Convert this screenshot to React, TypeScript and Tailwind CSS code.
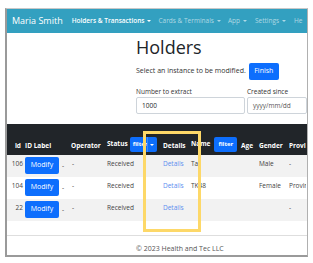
import React from 'react'

const font = { fontFamily: '"Open Sans", "Noto Sans", "Liberation Sans", sans-serif' }

function Caret({ className = '' }: { className?: string }) {
  return (
    <span
      className={`inline-block w-0 h-0 border-l-[2px] border-r-[2px] border-t-[2.5px] border-l-transparent border-r-transparent ml-[3px] align-middle ${className}`}
    />
  )
}

function FilterButton({ split = false }: { split?: boolean }) {
  return (
    <span className="inline-flex h-[15px] rounded-[2px] bg-[#0d6efd] text-white text-[6px] items-center overflow-hidden">
      {split ? (
        <>
          <span className="w-[17px] pl-[3px] overflow-hidden whitespace-nowrap">filter</span>
          <span className="w-[10px] h-full flex items-center justify-center border-l border-[#3d8bfd]">
            <span className="w-0 h-0 border-l-[2px] border-r-[2px] border-t-[2.5px] border-l-transparent border-r-transparent border-t-white" />
          </span>
        </>
      ) : (
        <span className="px-[4px]">filter</span>
      )}
    </span>
  )
}

const rows = [
  { id: '106', name: 'Ta', gender: 'Male', prov: '-', bg: 'bg-[#f2f2f2]' },
  { id: '104', name: 'TK48', gender: 'Female', prov: 'Provir', bg: 'bg-white' },
  { id: '22', name: '', gender: '', prov: '-', bg: 'bg-[#f2f2f2]' },
]

export default function App() {
  return (
    <div className="relative w-[313px] h-[263px] bg-white pl-[5px] pt-[8px]" style={font}>
      <div className="w-[303px] h-[249px] border-l-2 border-b-2 border-t border-r border-l-[#9a9a9a] border-b-[#9a9a9a] border-t-[#c8c8c8] border-r-[#b0b0b0] overflow-hidden flex flex-col">
        {/* Navbar */}
        <div className="h-[24px] shrink-0 bg-[#33a0c0] flex items-center whitespace-nowrap text-white overflow-hidden">
          <span className="ml-[5px] text-[9px]">Maria Smith</span>
          <span className="ml-[9px] text-[6.5px] font-semibold">
            Holders &amp; Transactions<Caret className="border-t-white" />
          </span>
          <span className="ml-[7px] text-[6.5px] text-white/60">
            Cards &amp; Terminals<Caret className="border-t-white/60" />
          </span>
          <span className="ml-[7px] text-[6.5px] text-white/60">
            App<Caret className="border-t-white/60" />
          </span>
          <span className="ml-[8px] text-[6.5px] text-white/60">
            Settings<Caret className="border-t-white/60" />
          </span>
          <span className="ml-[8px] text-[6.5px] text-white/60">He</span>
        </div>

        {/* Page head */}
        <div className="h-[91px] shrink-0 pl-[129px] text-[#212529]">
          <h1 className="text-[18px] leading-[22px] font-medium mt-[3px]">Holders</h1>
          <div className="flex items-center mt-[5px] whitespace-nowrap">
            <span className="text-[7px] text-[#333]">Select an instance to be modified.</span>
            <span className="ml-[3px] w-[30px] h-[17px] rounded-[2px] bg-[#0d6efd] text-white text-[7px] flex items-center justify-center">
              Finish
            </span>
          </div>
          <div className="flex mt-[7px] whitespace-nowrap">
            <div className="w-[120px]">
              <div className="text-[6.5px] leading-[9px] text-[#333]">Number to extract</div>
              <div className="mt-[1px] w-[109px] h-[17px] border border-[#ced4da] rounded-[2px] flex items-center pl-[5px] text-[6.5px]">
                1000
              </div>
            </div>
            <div>
              <div className="text-[6.5px] leading-[9px] text-[#333]">Created since</div>
              <div className="mt-[1px] w-[60px] h-[17px] border border-[#ced4da] rounded-[2px] flex items-center pl-[5px] text-[6.5px] text-[#555]">
                yyyy/mm/dd
              </div>
            </div>
          </div>
        </div>

        {/* Table header */}
        <div className="h-[31px] shrink-0 bg-[#212529] text-white font-bold text-[6.5px] flex items-end pb-[4px] whitespace-nowrap">
          <div className="w-[18px] text-right pr-[4px]">id</div>
          <div className="w-[46px]">ID Label</div>
          <div className="w-[36px]">Operator</div>
          <div className="w-[56px] flex items-start -mb-[1px]">
            <span className="mt-[2px]">Status</span>
            <span className="ml-[2px]"><FilterButton split /></span>
          </div>
          <div className="w-[28px]">Details</div>
          <div className="w-[50px] flex items-start -mb-[1px]">
            <span className="mt-[2px]">Name</span>
            <span className="ml-[4px]"><FilterButton /></span>
          </div>
          <div className="w-[18px]">Age</div>
          <div className="w-[30px]">Gender</div>
          <div className="w-[17px] overflow-hidden">Provi</div>
        </div>

        {/* Rows */}
        {rows.map(r => (
          <div key={r.id} className={`h-[22px] shrink-0 ${r.bg} flex items-start text-[6.5px] text-[#444] whitespace-nowrap`}>
            <div className="w-[18px] text-right pr-[2px] pt-[4px]">{r.id}</div>
            <div className="w-[43px] flex items-start pt-[2px]">
              <span className="w-[34px] h-[17px] rounded-[2px] bg-[#0d6efd] text-white text-[7px] flex items-center justify-center">
                Modify
              </span>
              <span className="ml-[3px] pt-[4px]">-</span>
            </div>
            <div className="w-[39px] pl-[4px] pt-[4px]">-</div>
            <div className="w-[56px] pt-[4px]">Received</div>
            <div className="w-[28px] pt-[4px] text-[#5b8def]">Details</div>
            <div className="w-[68px] pt-[4px]">{r.name}</div>
            <div className="w-[30px] pt-[4px]">{r.gender}</div>
            <div className="w-[17px] pt-[4px] overflow-hidden">{r.prov}</div>
          </div>
        ))}

        <div className="h-[14px] shrink-0" />
        <div className="border-t border-[#dedede] flex-1 pl-[129px] pt-[8px] text-[7px] text-[#555] whitespace-nowrap">
          © 2023 Health and Tec LLC
        </div>
      </div>

      {/* Highlight overlay */}
      <div className="absolute left-[143px] top-[131px] w-[58px] h-[101px] border-[3px] border-[#fdd868]" />
    </div>
  )
}
